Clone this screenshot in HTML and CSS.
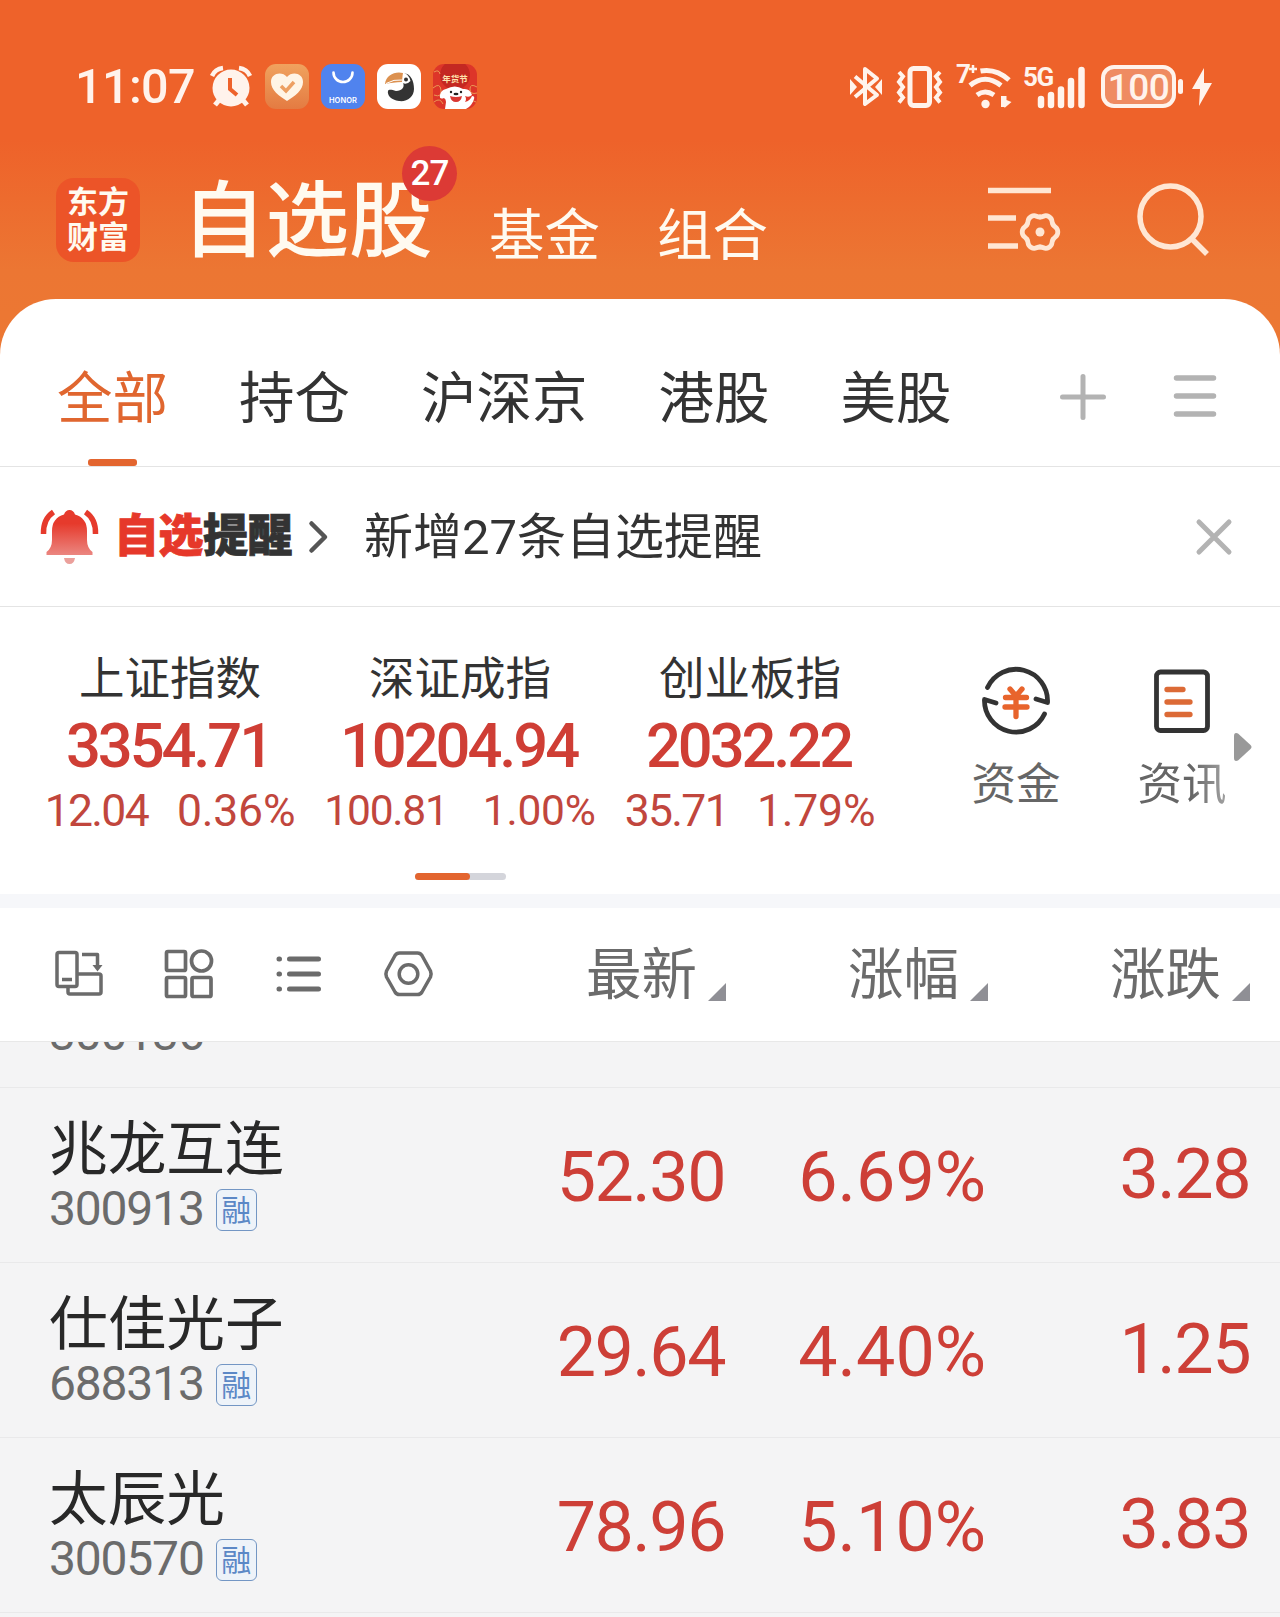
FILE: index.html
```html
<!DOCTYPE html>
<html lang="zh-CN">
<head>
<meta charset="utf-8">
<title>自选股</title>
<link rel="stylesheet" href="styles.css">
</head>
<body>
<div class="app">
  <div class="status">
    <span class="time">11:07</span>
    <svg class="st-alarm" width="42" height="42" viewBox="0 0 42 42"><path d="M10 33l-5 6M32 33l5 6" stroke="#fff3ec" stroke-width="5"/><circle cx="21" cy="22" r="18.500" fill="#fff3ec"/><path d="M2 10Q5 3 13 2M40 10Q37 3 29 2" stroke="#fff3ec" stroke-width="4.500" fill="none"/><path d="M20 12v11l7 6" stroke="#ee622b" stroke-width="4" fill="none"/></svg>
    <svg class="st-app" width="44" height="45" viewBox="0 0 44 45"><defs><linearGradient id="gh" x2="0" y2="1"><stop stop-color="#f0a25e"/><stop offset="1" stop-color="#e47b42"/></linearGradient></defs><rect width="44" height="45" rx="11" fill="url(#gh)"/><path d="M22 37C14 32 6 26 6 18C6 9 17 7 22 13C27 7 38 9 38 18C38 26 30 32 22 37Z" fill="#fff5e6"/><path d="M16 22l5 5 8-9" stroke="#eda062" stroke-width="3.500" fill="none"/></svg>
    <svg class="st-app" width="44" height="45" viewBox="0 0 44 45"><rect width="44" height="45" rx="11" fill="#5083ee"/><path d="M12.500 8.500a9.500 9.500 0 0 0 19 0" stroke="#fff" stroke-width="2.600" fill="none" stroke-linecap="round"/><text x="22" y="38.500" class="honor">HONOR</text></svg>
    <svg class="st-app" width="44" height="45" viewBox="0 0 44 45"><rect width="44" height="45" rx="11" fill="#fff"/><path d="M8 20C9 11 18 7 26 9L25 18C19 18 13 19 8 20Z" fill="#dc9150"/><path d="M9 19.500Q17 15 25 16" stroke="#fff" stroke-width="1" fill="none"/><path d="M27 9C34 10 37 17 37 25C37 33 30 38 22 37C14 36 10 31 11 27C12 25 15 26 19 27C25 27 28 23 26 19Z" fill="#333"/><path d="M26 8.500Q32 10 33.500 17Q30 21 25.500 19Z" fill="#fff"/><circle cx="29" cy="15.500" r="2" fill="#333"/></svg>
    <svg class="st-app" width="44" height="45" viewBox="0 0 44 45"><defs><clipPath id="jd"><rect width="44" height="45" rx="11"/></clipPath></defs><g clip-path="url(#jd)"><rect width="44" height="45" fill="#dd3529"/><circle cx="22" cy="11" r="15" fill="#c42822"/><g fill="none" stroke="#e99a55" stroke-width="1"><path d="M0 24q7-6 8 2t-7 5M1 38q6-5 9 2M44 23q-7-4-7 2t7 4M43 38q-5-3-8 3M1 8q5-3 6 2"/></g><path d="M12 45L13 38Q13 35 11 34Q6 36 7 31Q8 26 13 25Q22 20 30 25Q37 24 39 31Q36 34 32 32Q34 35 32 38Q37 37 39 32Q42 32 41 35Q39 42 33 45Z" fill="#fff"/><circle cx="18" cy="28" r="1.200" fill="#222"/><circle cx="28" cy="28" r="1.200" fill="#222"/><ellipse cx="23" cy="30" rx="2.500" ry="1.300" fill="#222"/><path d="M17 32q6 2 12 0q-1 6-6 6t-6-6Z" fill="#d93732"/><text x="22" y="17.500" class="nianhuo">年货节</text></g></svg>
    <div class="st-right">
      <svg width="34" height="44" viewBox="0 0 34 44"><path d="M6 11.500L28 30L16 39V4L28 13.500L6 32" fill="none" stroke="#fff3ec" stroke-width="4" stroke-linejoin="round"/><path d="M1 14l7 8-7 8zM33 14l-7 8 7 8z" fill="#fff3ec"/></svg>
      <svg class="st-vib" width="49" height="44" viewBox="0 0 49 44"><rect x="15" y="3.500" width="19.500" height="37" rx="3.500" fill="none" stroke="#fff3ec" stroke-width="5"/><path d="M4 7l4 4.500-4 5.500 4 5-4 5.500 4 5-4 5M45 7l-4 4.500 4 5.500-4 5 4 5.500-4 5 4 5" fill="none" stroke="#fff3ec" stroke-width="4"/></svg>
      <svg class="st-wifi" width="58" height="46" viewBox="0 0 58 46"><text x="0" y="19" class="st-small">7</text><path d="M13 5h8M17 1v8" stroke="#fff3ec" stroke-width="2.500"/><path d="M24.500 7Q40 4 53 16M14 21.500Q29 9 45 21.500M21 31Q29 25 38 31" stroke="#fff3ec" stroke-width="5" fill="none"/><circle cx="29.500" cy="40" r="4.200" fill="#fff3ec"/><path d="M40 39l5-7v11h3.500v-11h2v4l5 2-7 6V32H45Z" fill="#fff3ec"/></svg>
      <svg class="st-sig" width="64" height="46" viewBox="0 0 64 46"><text x="0" y="22" class="st-small">5G</text><path d="M18 35v6M28 31v10M38 25.500v15.500M48 17v24M58.500 6v35" stroke="#fff3ec" stroke-width="6.500" stroke-linecap="round"/></svg>
      <svg class="st-bat" width="84" height="43" viewBox="0 0 84 43"><rect x="2" y="2" width="71" height="39" rx="11" fill="#ef8b62" stroke="#fff3ec" stroke-width="4"/><rect x="77" y="14" width="5" height="15" rx="2.500" fill="#fff3ec"/><text x="37.500" y="34.500" class="bat-n">100</text></svg>
      <svg class="st-bolt" width="20" height="38" viewBox="0 0 20 38"><path d="M12 0L0 21h8L7 38L20 15h-8Z" fill="#fff3ec"/></svg>
    </div>
  </div>

  <div class="header">
    <div class="logo"><span>东方</span><span>财富</span></div>
    <div class="title">自选股<span class="badge">27</span></div>
    <div class="sub">基金</div>
    <div class="sub">组合</div>
    <svg class="h-list" width="74" height="66" viewBox="0 0 74 66">
      <defs><path id="lobe" d="M13 -7.500C15 -4 17.800 -5 17.800 0C17.800 5 15 4 13 7.500"/></defs>
      <path fill="none" stroke="#ffe6d3" stroke-width="5.500" d="M0 3.500h63M0 31h28M0 59h30"/>
      <g transform="translate(52 45)" fill="none" stroke="#ffe6d3" stroke-width="4.800" stroke-linecap="round">
        <use href="#lobe"/><use href="#lobe" transform="rotate(60)"/><use href="#lobe" transform="rotate(120)"/><use href="#lobe" transform="rotate(180)"/><use href="#lobe" transform="rotate(240)"/><use href="#lobe" transform="rotate(300)"/>
      </g>
      <circle cx="52" cy="45" r="4.500" fill="#ffe6d3"/>
    </svg>
    <svg class="h-search" width="74" height="74" viewBox="0 0 74 74"><circle cx="33.500" cy="33.500" r="30.500" fill="none" stroke="#ffe6d3" stroke-width="5.500"/><path d="M55 56l15 15" stroke="#ffe6d3" stroke-width="5.500"/></svg>
  </div>

  <div class="panel">
    <div class="tabs">
      <span class="tab on">全部</span><span class="tab">持仓</span><span class="tab">沪深京</span><span class="tab">港股</span><span class="tab">美股</span>
      <svg class="t-plus" width="46" height="46" viewBox="0 0 46 46"><path d="M23 2.500v41M2.500 23h41" stroke="#b3b3b3" stroke-width="5" stroke-linecap="round"/></svg>
      <svg class="t-menu" width="42" height="44" viewBox="0 0 42 44"><path d="M2.500 4h37M2.500 22h37M2.500 40h37" stroke="#b3b3b3" stroke-width="5.500" stroke-linecap="round"/></svg>
    </div>

    <div class="alert">
      <svg class="bell" width="58" height="56" viewBox="0 0 58 56"><defs><linearGradient id="gb" x2="0" y2="1"><stop offset=".3" stop-color="#e63a2c"/><stop offset="1" stop-color="#eb8680"/></linearGradient></defs><path d="M5.500 46V43Q11 39 11 31V22Q11 9 23 5.500Q24.500 1 28.500 1T34 5.500Q46 9 46 22V31Q46 39 51.500 43V46Z" fill="url(#gb)"/><path d="M23 49h11q-1 6-5.500 6T23 49Z" fill="#eba09b"/><path d="M2.500 25Q2 10 12.500 3M54.500 25Q55 10 44.500 3" stroke="#e63a2c" stroke-width="5.500" fill="none"/></svg>
      <span class="a-title"><b>自选</b>提醒</span>
      <svg class="chev" width="20" height="32" viewBox="0 0 20 32"><path d="M2.500 2.500L16 16L2.500 29.500" fill="none" stroke="#555" stroke-width="4.500" stroke-linecap="round" stroke-linejoin="round"/></svg>
      <span class="a-text">新增27条自选提醒</span>
      <svg class="close" width="36" height="36" viewBox="0 0 36 36"><path d="M3 3l30 30M33 3L3 33" stroke="#b3b3b3" stroke-width="5" stroke-linecap="round"/></svg>
    </div>

    <div class="market">
      <div class="indices">
        <div class="cols">
          <div class="idx"><div class="i-name">上证指数</div><div class="i-val">3354.71</div><div class="i-chg"><span>12.04</span><span>0.36%</span></div></div>
          <div class="idx"><div class="i-name">深证成指</div><div class="i-val">10204.94</div><div class="i-chg shrink"><span>100.81</span><span>1.00%</span></div></div>
          <div class="idx"><div class="i-name">创业板指</div><div class="i-val">2032.22</div><div class="i-chg"><span>35.71</span><span>1.79%</span></div></div>
        </div>
        <div class="pager"><i></i></div>
      </div>
      <div class="tools">
        <div class="tool">
          <svg width="70" height="70" viewBox="0 0 70 70"><g fill="none" stroke="#333" stroke-width="4.800" stroke-linecap="round" stroke-linejoin="round"><path d="M6.500 21.500A31.500 31.500 0 0 1 66.500 36.500L55 33"/><path d="M63.500 48A31.500 31.500 0 0 1 3.500 33.500L15 37"/></g><path d="M29 23l6 7 6-7M24.500 31.500h21M24 41h22M35 31v19.500" fill="none" stroke="#e8642c" stroke-width="5.300" stroke-linecap="round"/></svg>
          <span>资金</span>
        </div>
        <div class="tool fade">
          <svg width="70" height="70" viewBox="0 0 70 70"><rect x="9.500" y="6" width="51" height="58.500" rx="4" fill="none" stroke="#333" stroke-width="4.800"/><path d="M20 23.500h16M20 36h23M20 48.500h23" stroke="#dc6a36" stroke-width="5.300" stroke-linecap="round"/></svg>
          <span>资讯</span>
        </div>
        <svg class="more" width="18" height="30" viewBox="0 0 18 30"><path d="M0 4Q0 0 4 1.500L16.500 13Q18.500 15 16.500 17L4 28.500Q0 30 0 26Z" fill="#999"/></svg>
      </div>
    </div>

    <div class="colhead">
      <div class="views">
        <svg width="50" height="50" viewBox="0 0 50 50"><g fill="none" stroke="#6b6b6b" stroke-width="3.500" stroke-linejoin="round"><rect x="3" y="3.500" width="20" height="34" rx="2"/><path d="M8 30.500h10M14 38v5q0 2 2 2h29q2 0 2-2V27q0-2-2-2H24M28 5.500h15.500V16"/></g><path d="M38.500 16h10l-5 6.500Z" fill="#6b6b6b"/></svg>
        <svg width="50" height="50" viewBox="0 0 50 50"><g fill="none" stroke="#6b6b6b" stroke-width="3.700"><rect x="2.500" y="2.500" width="19" height="19" rx="1.500"/><circle cx="37.500" cy="12" r="10"/><rect x="2.500" y="28.500" width="19" height="19" rx="1.500"/><rect x="28" y="28.500" width="19" height="19" rx="1.500"/></g></svg>
        <svg width="50" height="50" viewBox="0 0 50 50"><g stroke="#6b6b6b" stroke-width="5" stroke-linecap="round"><path d="M15.500 10h29M15.500 25h29M15.500 40h29M5 10h.5M5 25h.5M5 40h.5"/></g></svg>
        <svg width="50" height="50" viewBox="0 0 50 50"><g fill="none" stroke="#6b6b6b" stroke-width="3.500" stroke-linejoin="round"><path d="M15.500 4h18q3 0 4.500 2.500L46.500 22q1.200 3 0 6L38 43q-1.500 2.500-4.500 2.500h-18q-3 0-4.500-2.500L2.500 28q-1.200-3 0-6L11 6.500Q12.500 4 15.500 4Z"/><circle cx="24.500" cy="25" r="9.300"/></g></svg>
      </div>
      <div class="sort c1">最新<i></i></div>
      <div class="sort c2">涨幅<i></i></div>
      <div class="sort c3">涨跌<i></i></div>
    </div>

    <div class="list">
      <div class="row first"><div class="stock"><div class="name">&nbsp;</div><div class="code">300136</div></div></div>
      <div class="row"><div class="stock"><div class="name">兆龙互连</div><div class="code">300913<em>融</em></div></div><div class="num c1">52.30</div><div class="num c2">6.69%</div><div class="num c3">3.28</div></div>
      <div class="row"><div class="stock"><div class="name">仕佳光子</div><div class="code">688313<em>融</em></div></div><div class="num c1">29.64</div><div class="num c2">4.40%</div><div class="num c3">1.25</div></div>
      <div class="row"><div class="stock"><div class="name">太辰光</div><div class="code">300570<em>融</em></div></div><div class="num c1">78.96</div><div class="num c2">5.10%</div><div class="num c3">3.83</div></div>
    </div>
  </div>
</div>
</body>
</html>
```
FILE: styles.css
```css
* { box-sizing: border-box; }
body {
  margin: 0;
  font-family: Roboto, "Noto Sans CJK SC", sans-serif;
  color: #333;
}
svg { display: block; flex: none; overflow: visible; }
.app {
  width: 1280px;
  height: 1617px;
  overflow: hidden;
  display: flex;
  flex-direction: column;
  background: linear-gradient(#ee622a 0, #ee622a 140px, #ec7633 270px, #ec7833 360px);
}

/* status bar */
.status {
  height: 109px;
  padding: 64px 68px 0 75px;
  display: flex;
  align-items: center;
  flex: none;
}
.time {
  width: 121px;
  font-size: 48.500px;
  font-weight: 500;
  line-height: 45px;
  color: #fff3ec;
  letter-spacing: -0.600px;
}
.st-alarm { margin-left: 14px; }
.st-app { margin-left: 12px; }
.st-alarm + .st-app { margin-left: 13px; }
.honor { font: 600 7.500px Inter, sans-serif; fill: #fff; text-anchor: middle; letter-spacing: 0.100px; }
.nianhuo { font: 700 8.500px "Noto Sans CJK SC", sans-serif; fill: #ffe2ae; text-anchor: middle; }
.st-right { margin-left: auto; display: flex; align-items: center; }
.st-vib { margin-left: 12px; }
.st-wifi { margin-left: 12px; }
.st-sig { margin-left: 9px; }
.st-bat { margin-left: 14px; }
.st-bolt { margin-left: 7px; }
.st-small { font: 700 26px Roboto, sans-serif; fill: #fff3ec; letter-spacing: -1.500px; }
.bat-n { font: 500 37px Roboto, sans-serif; fill: #fff3ec; text-anchor: middle; letter-spacing: -0.500px; }

/* app header */
.header {
  height: 190px;
  padding: 32px 69px 0 56px;
  display: flex;
  align-items: center;
  flex: none;
  color: #fffaf0;
}
.logo {
  width: 84px;
  height: 84px;
  border-radius: 18px;
  background: #ec5428;
  display: flex;
  flex-direction: column;
  align-items: center;
  justify-content: center;
  font-size: 31px;
  font-weight: 700;
  line-height: 35px;
}
.title {
  position: relative;
  margin: 4px 0 0 42px;
  font-size: 83.500px;
  line-height: 84px;
  width: 251px;
  font-weight: 500;
}
.badge {
  position: absolute;
  left: 220px;
  top: -34px;
  width: 55px;
  height: 55px;
  border-radius: 50%;
  background: #dc3a35;
  color: #fff;
  font-size: 35px;
  font-weight: 500;
  line-height: 56px;
  letter-spacing: -1px;
  text-align: center;
}
.sub { margin: 33px 0 0 57px; font-size: 55.500px; line-height: 56px; }
.title + .sub { margin-left: 56px; }
.h-list { margin-left: auto; }
.h-search { margin-left: 75px; }

/* white panel */
.panel {
  flex: 1;
  min-height: 0;
  background: #fff;
  border-radius: 56px 56px 0 0;
  overflow: hidden;
}
.tabs {
  height: 168px;
  padding: 31px 61px 0 57px;
  display: flex;
  gap: 71px;
  border-bottom: 1px solid #e4e4e4;
}
.tab { position: relative; font-size: 55.500px; line-height: 140px; }
.tab.on { color: #e0662f; }
.tab.on::after {
  content: "";
  position: absolute;
  left: 31px;
  bottom: 0;
  width: 49px;
  height: 7px;
  border-radius: 3px;
  background: #e3652f;
}
.t-plus { margin: 44px 0 0 37px; }
.t-menu { margin: 44px 0 0 -3px; }

.alert {
  height: 140px;
  padding: 0 48px 0 41px;
  display: flex;
  align-items: center;
  border-bottom: 1px solid #e4e4e4;
}
.a-title {
  margin-left: 15px;
  font-size: 45px;
  font-weight: 900;
  letter-spacing: -0.500px;
  line-height: 60px;
  -webkit-text-stroke: 0.800px currentColor;
}
.a-title b { color: #e6382a; font-weight: 900; }
.chev { margin-left: 17px; }
.a-text { margin: 2px 0 0 35px; font-size: 49px; line-height: 60px; }
.close { margin-left: auto; }

.market {
  height: 301px;
  display: flex;
  border-bottom: 14px solid #f6f7fa;
}
.indices { width: 870px; margin-left: 25px; padding-top: 41px; }
.cols { display: flex; }
.idx { width: 290px; text-align: center; white-space: nowrap; }
.i-name { font-size: 45.500px; line-height: 64px; }
.i-val {
  margin-top: 2px;
  font-size: 61.500px;
  font-weight: 500;
  line-height: 64px;
  letter-spacing: -3.100px;
  text-indent: -3px;
  color: #cf3e35;
}
.i-chg {
  margin-top: 1px;
  display: flex;
  justify-content: center;
  gap: 29px;
  font-size: 44.500px;
  line-height: 64px;
  letter-spacing: -1.700px;
  color: #c1463d;
}
.i-chg span + span { letter-spacing: -0.200px; }
.i-chg.shrink { font-size: 42.500px; gap: 35px; letter-spacing: -1.200px; }
.pager { width: 91px; height: 7px; margin: 30px auto 0; border-radius: 4px; background: #d4d5db; }
.pager i { display: block; width: 55px; height: 7px; border-radius: 4px; background: #e3652f; }
.tools { position: relative; display: flex; padding: 59px 0 0 38px; }
.tool {
  width: 166px;
  display: flex;
  flex-direction: column;
  align-items: center;
  font-size: 44.500px;
  color: #666;
}
.tool span { margin-top: 19px; line-height: 60px; }
.fade span { -webkit-mask-image: linear-gradient(90deg, #000 60%, rgba(0,0,0,0.600)); mask-image: linear-gradient(90deg, #000 60%, rgba(0,0,0,0.600)); }
.more { position: absolute; left: 339px; top: 125px; }

/* column headings */
.colhead {
  height: 134px;
  display: grid;
  grid-template-columns: 464px 262px 262px 262px;
  align-items: center;
  border-bottom: 1px solid #e8e8e8;
}
.views { display: flex; gap: 60px; padding: 0 0 2px 54px; }
.sort {
  display: flex;
  justify-content: flex-end;
  padding-top: 3px;
  font-size: 55.500px;
  line-height: 56px;
  color: #6b6b6b;
}
.sort i {
  width: 18px;
  height: 18px;
  margin: 35px 0 0 11px;
  background: #8f8f95;
  clip-path: polygon(100% 0, 100% 100%, 0 100%);
}

/* quotes */
.list { background: #f4f4f5; height: 575px; overflow: hidden; }
.row {
  height: 175px;
  display: grid;
  grid-template-columns: 465px 260px 261px 264px;
  border-bottom: 1px solid #e9e9ea;
}
.row.first { margin-top: -129px; }
.stock { padding: 29px 0 0 49px; }
.name { font-size: 58.700px; line-height: 66px; color: #282828; }
.code {
  display: flex;
  align-items: center;
  margin-top: -2px;
  font-size: 48px;
  line-height: 56px;
  letter-spacing: -1.200px;
  color: #6b6b6b;
}
.code em {
  width: 41px;
  height: 42px;
  margin: 1px 0 0 12px;
  border: 1.500px solid #7396c4;
  border-radius: 6px;
  background: #eef3f9;
  color: #5c88c6;
  font-size: 30px;
  font-style: normal;
  line-height: 42px;
  letter-spacing: 0;
  text-align: center;
}
.num {
  text-align: right;
  font-size: 70px;
  line-height: 178px;
  letter-spacing: -1.500px;
  color: #cd3f37;
}
.num.c2 { letter-spacing: 0; }
.num.c3 { line-height: 173px; }
```
